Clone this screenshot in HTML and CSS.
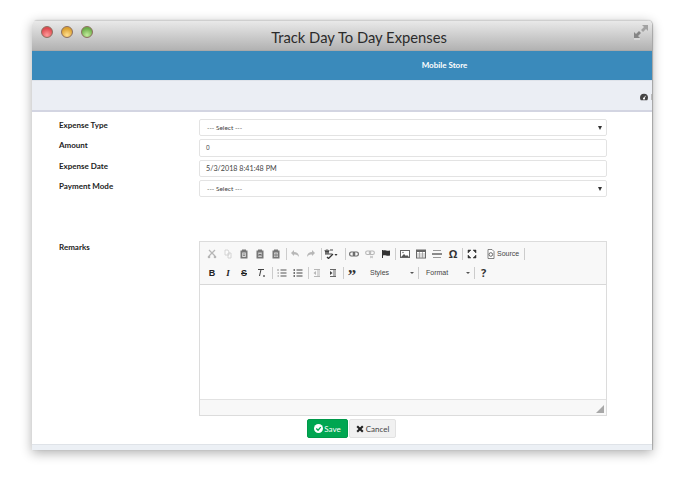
FILE: index.html
```html
<!DOCTYPE html>
<html lang="en">
<head>
<meta charset="utf-8">
<title>Track Day To Day Expenses</title>
<link rel="stylesheet" href="styles.css">
</head>
<body>
<div class="window">
  <header class="titlebar">
    <div class="lights">
      <span class="light red"></span>
      <span class="light amber"></span>
      <span class="light green"></span>
    </div>
    <h1 class="title">Track Day To Day Expenses</h1>
    <svg class="expand" viewBox="0 0 16 16" width="16" height="16"><path d="M9 1h6v6l-2-2-3 3-2-2 3-3z" fill="#a2a2a2"/><path d="M1 8l2 2 3-3 2 2-3 3 2 2H1z" fill="#858585"/><path d="M1 15h6" stroke="#e8e8e8"/></svg>
  </header>
  <div class="brandbar">Mobile Store</div>
  <div class="subbar">
    <svg class="gauge" viewBox="0 0 10 10" width="8" height="8"><path d="M5 1a5 5 0 0 0-5 5c0 1.300.5 2.300 1 3h8c.5-.7 1-1.700 1-3a5 5 0 0 0-5-5z" fill="#444"/><circle cx="5" cy="7" r="1.300" fill="#fff"/><path d="M5 7l2-3.500" stroke="#fff"/></svg>
    <span class="cut"></span>
  </div>
  <main class="content">
    <form class="form">
      <label class="lbl">Expense Type</label>
      <div class="field select"><span>--- Select ---</span><i class="arrow"></i></div>
      <label class="lbl">Amount</label>
      <div class="field"><span class="num">0</span></div>
      <label class="lbl">Expense Date</label>
      <div class="field"><span class="date">5/3/2018 8:41:48 PM</span></div>
      <label class="lbl">Payment Mode</label>
      <div class="field select"><span>--- Select ---</span><i class="arrow"></i></div>
      <label class="lbl remarks">Remarks</label>
      <div class="editor remarks">
        <div class="toolbar">
          <div class="tbrow">
            <svg class="ic dim" viewBox="0 0 10 10"><path d="M2 1l6 6M8 1L2 7" stroke="#555" stroke-width="1.300" fill="none"/><circle cx="2" cy="8" r="1.300" fill="#555"/><circle cx="8" cy="8" r="1.300" fill="#555"/></svg>
            <svg class="ic dim" viewBox="0 0 10 10"><path d="M2 1h3l1 2v3H2zM5 4h3v5H5z" fill="#fff" stroke="#888" stroke-width=".8"/></svg>
            <svg class="ic" viewBox="0 0 10 10"><path d="M3 .5h4v1h1.500v8h-7v-8H3z" fill="#777"/><path d="M3.200 3.500h3.600v4.500H3.200z" fill="#ddd"/><path d="M4 5h2M4 6.500h2" stroke="#555" stroke-width=".6"/></svg>
            <svg class="ic" viewBox="0 0 10 10"><path d="M3 .5h4v1h1.500v8h-7v-8H3z" fill="#777"/><path d="M3.200 3.500h3.600v4.500H3.200z" fill="#ccc"/><path d="M4 7V5l1 1 1-1v2" stroke="#444" fill="none" stroke-width=".6"/></svg>
            <svg class="ic" viewBox="0 0 10 10"><path d="M3 .5h4v1h1.500v8h-7v-8H3z" fill="#777"/><path d="M3.200 3.500h3.600v4.500H3.200z" fill="#ddd"/><path d="M4 5h2v2H4z" fill="none" stroke="#555" stroke-width=".6"/></svg>
            <span class="sep after-run"></span>
            <svg class="ic dim" viewBox="0 0 10 10"><path d="M1 4l3-3v2c3 0 5 2 5 5-1-2-3-2.500-5-2.500V7z" fill="#555"/></svg>
            <svg class="ic dim" viewBox="0 0 10 10"><path d="M9 4L6 1v2C3 3 1 5 1 8c1-2 3-2.500 5-2.500V7z" fill="#555"/></svg>
            <span class="sep after-run"></span>
            <svg class="ic wide" viewBox="0 0 14 10"><path d="M1 1l1 3 1-3 1 3 1-3M6 1h3M1 5h7" stroke="#444" stroke-width="1.100" fill="none"/><path d="M3 8l1.500 1.500L9 5" stroke="#333" stroke-width="1.300" fill="none"/><path d="M10.500 5h3L12 7z" fill="#333"/></svg>
            <span class="sep after-spell"></span>
            <svg class="ic" viewBox="0 0 10 10"><rect x=".7" y="3" width="5" height="4" rx="1.500" fill="none" stroke="#666" stroke-width="1.200"/><rect x="4.300" y="3" width="5" height="4" rx="1.500" fill="none" stroke="#666" stroke-width="1.200"/></svg>
            <svg class="ic dim" viewBox="0 0 10 10"><rect x=".7" y="2" width="5" height="3.500" rx="1.500" fill="none" stroke="#555" stroke-width="1.100"/><rect x="4.300" y="2" width="5" height="3.500" rx="1.500" fill="none" stroke="#555" stroke-width="1.100"/><path d="M5 7l3 2M8 7L5 9" stroke="#555" stroke-width=".8"/></svg>
            <svg class="ic" viewBox="0 0 10 10"><path d="M1.500 1v8" stroke="#333"/><path d="M2 1.500c2-1 4 1 7 0v5c-3 1-5-1-7 0z" fill="#333"/></svg>
            <span class="sep even"></span>
            <svg class="ic" viewBox="0 0 10 10"><rect x=".5" y="1.500" width="9" height="7" fill="#fff" stroke="#666"/><path d="M1 8l3-3 2 2 1-1 2 2z" fill="#555"/><circle cx="3" cy="3.500" r=".8" fill="#777"/></svg>
            <svg class="ic" viewBox="0 0 10 10"><rect x=".5" y="1" width="9" height="8" fill="#fff" stroke="#666"/><path d="M.5 1h9v2h-9z" fill="#666"/><path d="M.5 5h9M.5 7h9M3.500 3v6M6.500 3v6" stroke="#888" stroke-width=".6"/></svg>
            <svg class="ic" viewBox="0 0 10 10"><path d="M1 1.500h8M1 8.500h8" stroke="#999" stroke-width="1.200"/><path d="M0 5h10" stroke="#666" stroke-width="1.600"/></svg>
            <span class="omega">Ω</span>
            <span class="sep even"></span>
            <svg class="ic" viewBox="0 0 10 10"><path d="M1 1h3L1 4zM9 1v3L6 1zM1 9V6l3 3zM9 9H6l3-3z" fill="#333" stroke="#333" stroke-width=".5"/></svg>
            <svg class="ic src" viewBox="0 0 10 10"><path d="M2 .5h4l2 2v7H2z" fill="#fff" stroke="#666" stroke-width=".8"/><circle cx="4.800" cy="5.500" r="1.800" fill="none" stroke="#444" stroke-width=".8"/></svg>
            <span class="src-txt">Source</span>
            <span class="sep after-src"></span>
          </div>
          <div class="tbrow">
            <b class="fmt">B</b>
            <i class="fmt it">I</i>
            <s class="fmt">S</s>
            <svg class="ic tx" viewBox="0 0 10 10"><path d="M2 1.500h6M5 1.500L3.500 8" stroke="#444" stroke-width="1.100" fill="none"/><path d="M7 7l2 2M9 7L7 9" stroke="#555" stroke-width=".7"/></svg>
            <span class="sep after-run mr1"></span>
            <svg class="ic" viewBox="0 0 10 10"><path d="M3.500 2h6M3.500 5h6M3.500 8h6" stroke="#555" stroke-width="1.100"/><path d="M1 1v2M.5 5h1.500M.5 8h1.500" stroke="#777" stroke-width=".8"/></svg>
            <svg class="ic" viewBox="0 0 10 10"><path d="M3.500 2h6M3.500 5h6M3.500 8h6" stroke="#444" stroke-width="1.200"/><path d="M.5 2h1.500M.5 5h1.500M.5 8h1.500" stroke="#444" stroke-width="1.400"/></svg>
            <span class="sep after-run"></span>
            <svg class="ic dim" viewBox="0 0 10 10"><path d="M2 1.500h6M5 3h3M5 5h3M5 7h3M2 8.500h6" stroke="#555"/><path d="M4 3v4L1.500 5z" fill="#555"/></svg>
            <svg class="ic" viewBox="0 0 10 10"><path d="M2 1.500h6M5 3h3M5 5h3M5 7h3M2 8.500h6" stroke="#666"/><path d="M2 3v4l2.500-2z" fill="#444"/></svg>
            <span class="sep after-run"></span>
            <span class="quote">”</span>
            <span class="combo styles">Styles<i class="caret"></i></span>
            <span class="sep"></span>
            <span class="combo format">Format<i class="caret"></i></span>
            <span class="sep"></span>
            <b class="help">?</b>
          </div>
        </div>
        <div class="editarea"></div>
        <div class="statusbar"><svg viewBox="0 0 8 8" width="8" height="8"><path d="M8 0v8H0z" fill="#a8a8a8"/></svg></div>
      </div>
    </form>
    <div class="actions">
      <button class="btn save" type="button"><svg viewBox="0 0 10 10" width="9" height="9"><circle cx="5" cy="5" r="5" fill="#fff"/><path d="M2.500 5l2 2 3-3.500" stroke="#00a651" stroke-width="1.500" fill="none"/></svg>Save</button>
      <button class="btn cancel" type="button"><svg viewBox="0 0 10 10" width="8" height="8"><path d="M1.500 1.500l7 7M8.500 1.500l-7 7" stroke="#222" stroke-width="2.600"/></svg>Cancel</button>
    </div>
  </main>
  <footer class="foot"></footer>
</div>
</body>
</html>
```
FILE: styles.css
```css
* { box-sizing: border-box; }
html, body { margin: 0; padding: 0; background: #fff; }
body { width: 683px; height: 479px; overflow: hidden; font-family: Lato, "Open Sans", sans-serif; color: #333; }

.window {
  width: 620px;
  height: 430px;
  margin: 20px 0 0 32px;
  background: #fff;
  border-radius: 5px 5px 0 0;
  box-shadow: 0 3px 12px rgba(0,0,0,.32), 1px 0 1px rgba(0,0,0,.25);
  display: flex;
  flex-direction: column;
  overflow: hidden;
}

.titlebar {
  height: 31px;
  flex: none;
  display: flex;
  align-items: center;
  position: relative;
  background: linear-gradient(#e9e9e9, #b2b2b2);
  border-top: 1px solid #cfcfcf;
  border-bottom: 1px solid #a9a9a9;
}
.lights { display: flex; gap: 8px; padding: 0 0 8px 9px; }
.light { width: 12px; height: 12px; border-radius: 50%; border: 1px solid #8c6f60; }
.red { background: radial-gradient(circle at 50% 80%, #ff9a9a, #dd4a50 70%); }
.amber { background: radial-gradient(circle at 50% 80%, #ffdf8f, #dba030 70%); }
.green { background: radial-gradient(circle at 50% 80%, #c2ec9c, #6dad4a 70%); }
.title {
  position: absolute;
  left: 0; right: 0; top: 5px;
  margin: 0;
  padding-left: 34px;
  text-align: center;
  font: 400 14.750px/22px Lato, sans-serif;
  color: #2b2b2b;
}
.expand { position: absolute; right: 3px; top: 3px; }

.brandbar {
  height: 29px;
  flex: none;
  background: #3a8abb;
  color: #fff;
  font-size: 8px;
  font-weight: 700;
  line-height: 29px;
  text-align: center;
  padding-left: 205px;
}
.subbar {
  height: 32px;
  flex: none;
  background: #ebeef4;
  border-top: 1px solid #dfe3ea;
  border-bottom: 2px solid #d3d5e2;
  display: flex;
  justify-content: flex-end;
  align-items: center;
  gap: 3px;
  padding-top: 3px;
}
.gauge { flex: none; }
.cut { width: 1px; height: 6px; background: #bbb; }

.content { flex: 1; display: flex; flex-direction: column; min-height: 0; }
.form {
  display: grid;
  grid-template-columns: 140px 408px;
  grid-template-rows: 17px 18px 17px 17px;
  row-gap: 3px;
  padding: 7px 0 0 27px;
}
.lbl { font-size: 8px; font-weight: 700; line-height: 12px; color: #222; }
.field {
  height: 100%;
  border: 1px solid #e3e3e3;
  border-radius: 2px;
  display: flex;
  align-items: center;
  justify-content: space-between;
  padding: 0 5px 0 6px;
  font-size: 6.500px;
  color: #444;
  font-family: Lato, sans-serif;
}
.select { padding-left: 7px; }
.num { font: 400 6.500px/1 "Open Sans", sans-serif; }
.date { font-size: 7.200px; }
.arrow { width: 0; height: 0; border: 2.500px solid transparent; border-top: 4px solid #333; border-bottom: 0; margin-right: -1px; }
.lbl.remarks { margin-top: 41px; }
.editor.remarks {
  margin-top: 41px;
  height: 175px;
  border: 1px solid #dcdcdc;
  display: flex;
  flex-direction: column;
}
.toolbar { height: 43px; flex: none; background: #f8f8f8; border-bottom: 1px solid #d8d8d8; padding: 2px 0 0 4px; }
.tbrow { height: 19px; display: flex; align-items: center; }
.ic { width: 16px; height: 10px; flex: none; }
.wide { width: 18px; }
.tx { width: 18px; }
.dim { opacity: .4; }
.sep { width: 1px; height: 12px; background: #ccc; margin: 0; flex: none; }
.after-run { margin-left: 2px; }
.after-spell { margin-left: 5px; }
.even { margin: 0 1px; }
.mr1 { margin-right: 1px; }
.omega { width: 16px; font: 700 11px/12px "Open Sans", sans-serif; color: #333; text-align: center; flex: none; }
.src { width: 10px; margin-left: 6px; }
.src-txt { font: 400 7px/12px "Liberation Sans", sans-serif; color: #444; margin-left: 1px; width: 22px; flex: none; }
.after-src { margin-left: 5px; }
.fmt { width: 16px; font: 700 9px/12px "Liberation Serif", serif; color: #222; text-align: center; flex: none; text-decoration: none; }
.tbrow b.fmt { font-family: "Liberation Sans", sans-serif; }
.tbrow s.fmt { font-family: "Liberation Sans", sans-serif; text-decoration: line-through; }
.it { font-style: italic; }
.quote { font: 700 17px/12px "Liberation Serif", serif; color: #333; width: 16px; padding-top: 6px; text-align: center; flex: none; }
.combo { display: flex; font: 400 7px/12px "Liberation Sans", sans-serif; color: #444; flex: none; justify-content: space-between; align-items: center; }
.styles { width: 58px; padding: 0 4px 0 10px; }
.format { width: 55px; padding: 0 4px 0 7px; }
.caret { width: 0; height: 0; border: 2px solid transparent; border-top: 2px solid #555; border-bottom: 0; }
.help { font: 700 11px/12px "Open Sans", sans-serif; color: #333; margin-left: 6px; }
.editarea { flex: 1; background: #fff; }
.statusbar { height: 16px; flex: none; background: #f8f8f8; border-top: 1px solid #e2e2e2; display: flex; justify-content: flex-end; align-items: flex-end; padding: 0 2px 2px 0; }

.actions { display: flex; gap: 1px; padding: 3px 0 0 275px; }
.btn {
  height: 19px;
  border-radius: 2px;
  font: 400 8px/1 Lato, sans-serif;
  display: flex;
  align-items: center;
  justify-content: center;
  gap: 1px;
  padding: 0;
}
.save { width: 41px; background: #00a651; border: 1px solid #00994a; color: #fff; }
.cancel { width: 47px; background: #f1f1f1; border: 1px solid #e2e2e2; color: #444; gap: 2px; }
.foot { height: 6px; flex: none; margin-top: auto; background: #ecf0f5; border-top: 1px solid #dfe3e8; }
```
